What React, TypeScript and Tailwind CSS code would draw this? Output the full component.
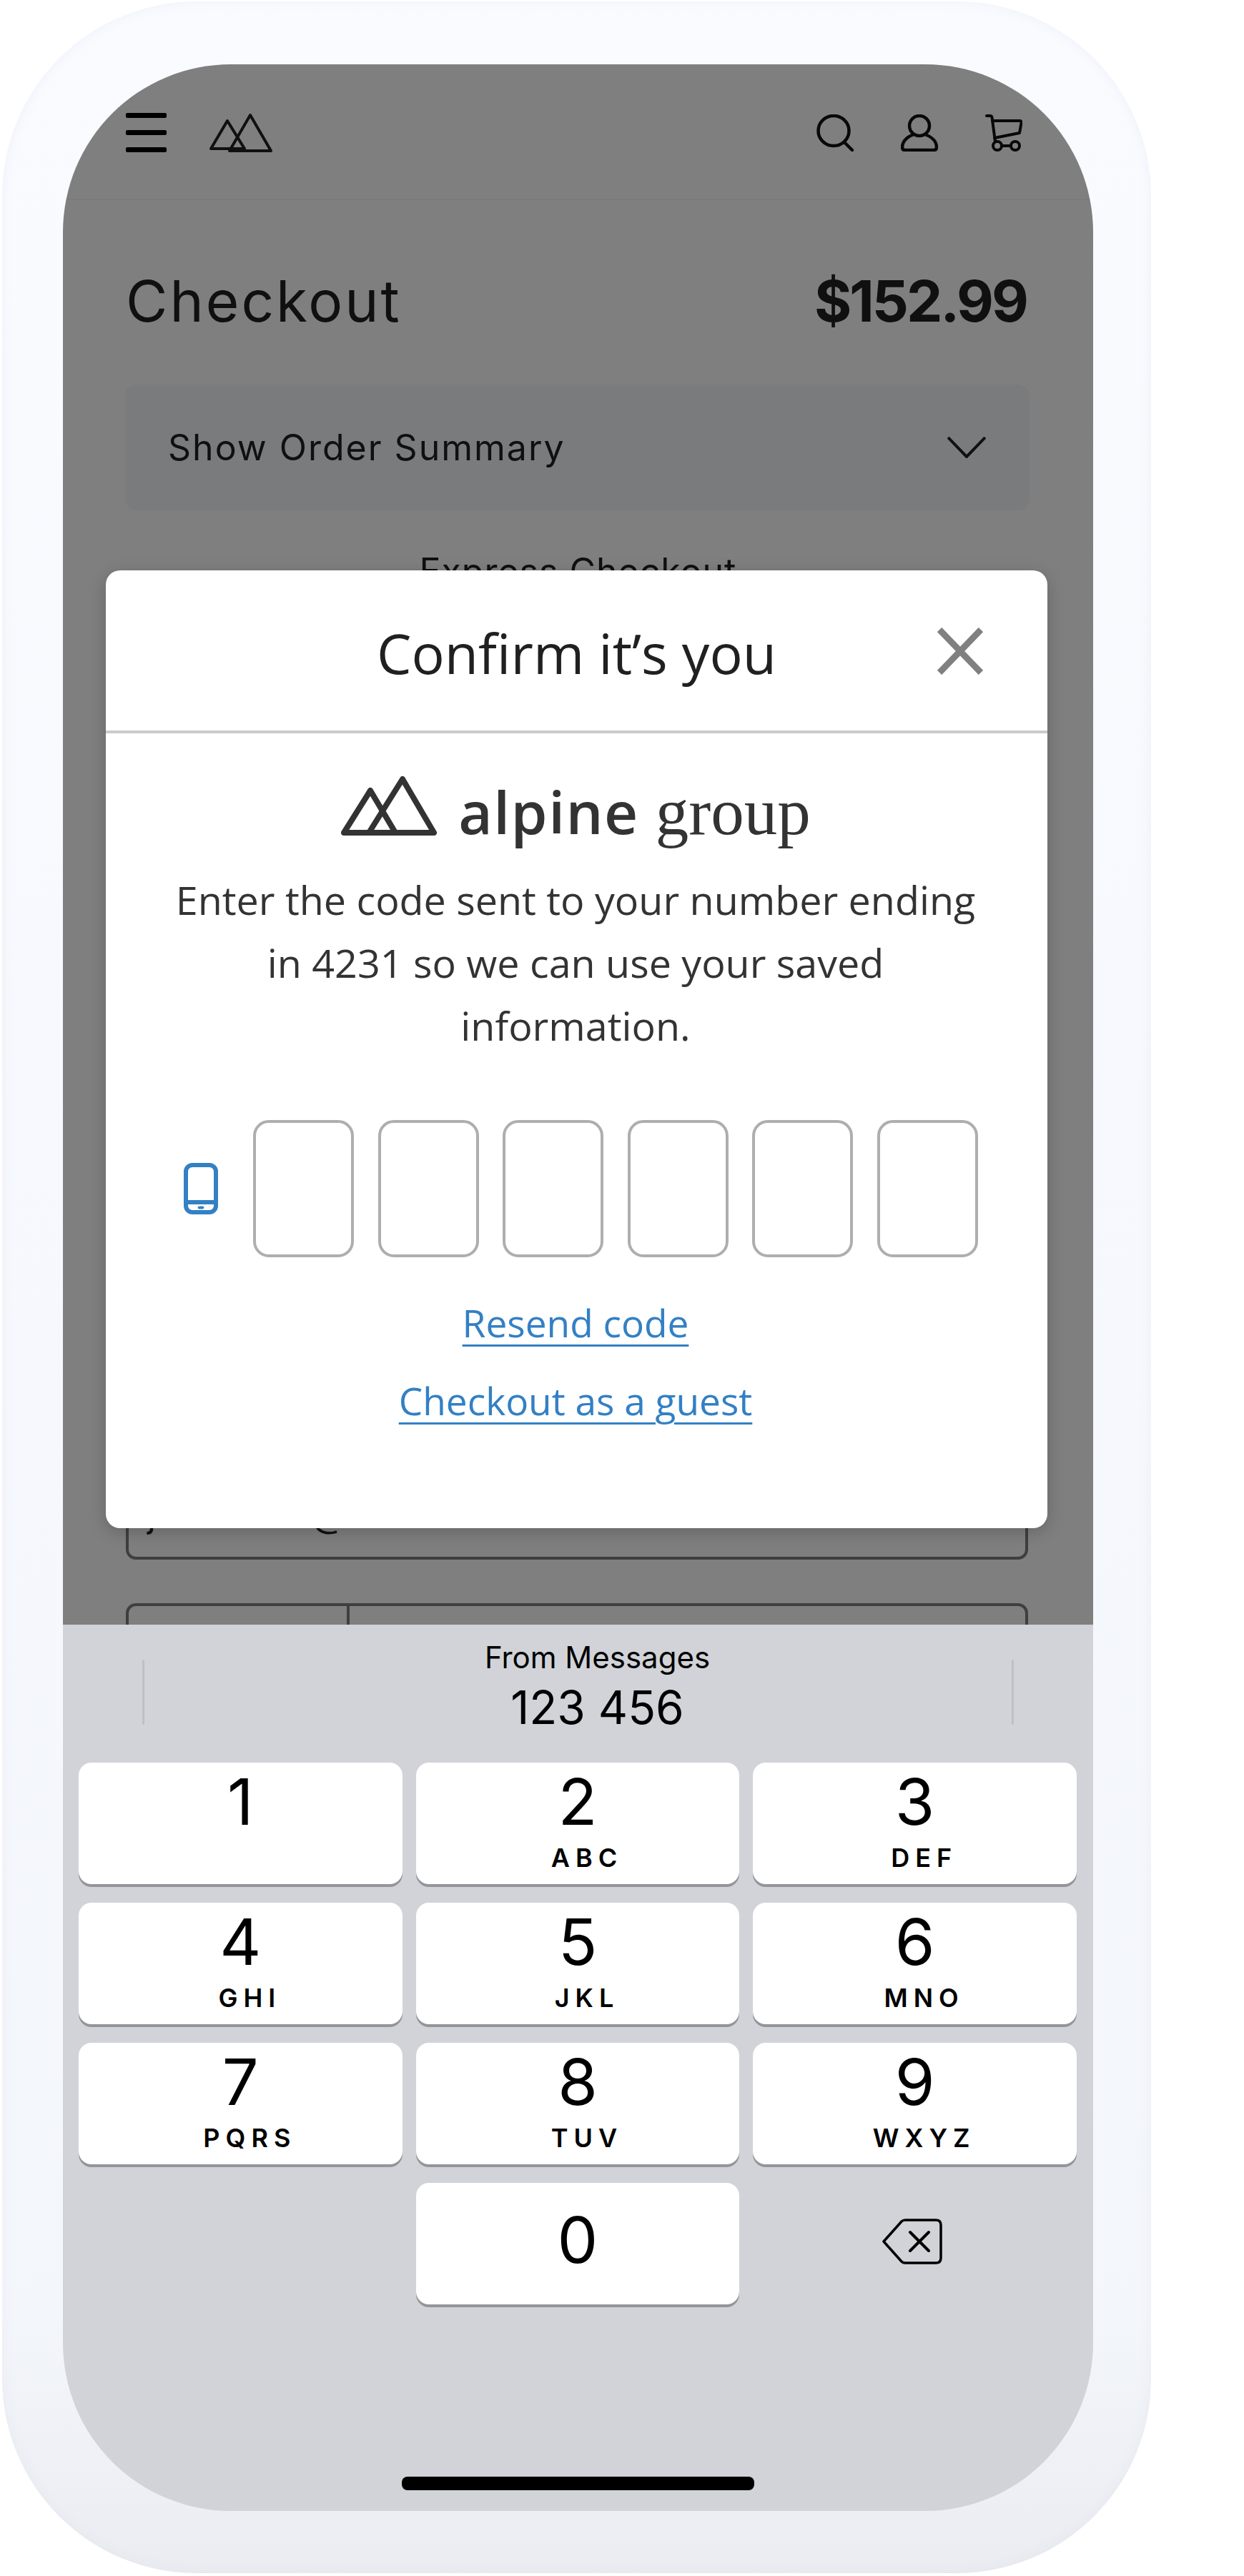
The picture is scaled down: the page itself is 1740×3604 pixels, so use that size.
const keys = [
  { digit: '1', letters: '' },
  { digit: '2', letters: 'ABC' },
  { digit: '3', letters: 'DEF' },
  { digit: '4', letters: 'GHI' },
  { digit: '5', letters: 'JKL' },
  { digit: '6', letters: 'MNO' },
  { digit: '7', letters: 'PQRS' },
  { digit: '8', letters: 'TUV' },
  { digit: '9', letters: 'WXYZ' },
];

function HeaderLogo() {
  return (
    <svg width="90" height="56" viewBox="0 0 90 56" fill="none" stroke="#202020" strokeWidth="4" strokeLinejoin="round">
      <path d="M3 50 L26 11 L50 50 Z" />
      <path d="M29 53 L58 3 L87 53 Z" />
    </svg>
  );
}

function AlpineLogo() {
  return (
    <svg width="136" height="85" viewBox="0 0 136 85" fill="none" stroke="#333333" strokeWidth="8" strokeLinejoin="round">
      <path d="M5 80 L42 21 L77 80 Z" />
      <path d="M40 80 L87 5 L131 80 Z" />
    </svg>
  );
}

function SearchIcon() {
  return (
    <svg width="52" height="52" viewBox="0 0 52 52" fill="none" stroke="#101010" strokeWidth="4.5" strokeLinecap="round">
      <ellipse cx="24" cy="23" rx="21.5" ry="21" />
      <path d="M39 39 L50 50" />
    </svg>
  );
}

function UserIcon() {
  return (
    <svg width="52" height="52" viewBox="0 0 52 52" fill="none" stroke="#101010" strokeWidth="4.5" strokeLinejoin="round">
      <ellipse cx="26" cy="16" rx="14" ry="14" />
      <path d="M18 28 C10 31 2 37 2 46 Q2 50 6 50 H46 Q50 50 50 46 C50 37 42 31 34 28" />
    </svg>
  );
}

function CartIcon() {
  return (
    <svg width="52" height="52" viewBox="0 0 52 52" fill="none" stroke="#101010" strokeWidth="4" strokeLinecap="round" strokeLinejoin="round">
      <path d="M2 2 H7 Q9 2 9.5 4 L14 38" />
      <path d="M10 9 H48 Q51 9 50.5 12 L48 26 L13 33" />
      <circle cx="17" cy="44" r="6" />
      <circle cx="42" cy="44" r="6" />
      <path d="M23 44 H36" />
    </svg>
  );
}

function PhoneIcon() {
  return (
    <svg width="48" height="72" viewBox="0 0 48 72" fill="none" stroke="#3380c4" strokeWidth="6">
      <rect x="3" y="3" width="42" height="66" rx="9" />
      <path d="M3 55 H45" />
      <rect x="20" y="61" width="8" height="3" rx="1.5" fill="#3380c4" strokeWidth="1" />
    </svg>
  );
}

function BackspaceIcon() {
  return (
    <svg width="84" height="64" viewBox="0 0 84 64" fill="none" stroke="#000000" strokeWidth="3.5" strokeLinejoin="round" strokeLinecap="round">
      <path d="M2 32 L27 4 Q29 2 32 2 H75 Q82 2 82 9 V55 Q82 62 75 62 H32 Q29 62 27 60 Z" />
      <path d="M39 19 L65 45 M65 19 L39 45" strokeWidth="4" />
    </svg>
  );
}

export default function App() {
  return (
    <div className="w-[1740px] h-[3604px] bg-white overflow-hidden">
      {/* Phone frame */}
      <div className="ml-[3px] mt-[2px] w-[1607px] h-[3598px] rounded-[272px] bg-gradient-to-b from-[#f9fbff] via-[#f3f6fb] via-90% to-[#eaecf1] pl-[85px] pr-[81px] pt-[88px] pb-[87px] shadow-[inset_0_0_16px_rgba(215,220,230,0.3)]">
        <div className="w-[1441px] h-[3423px] rounded-[235px] overflow-hidden flex flex-col font-['Inter',sans-serif]">
          {/* Checkout page behind the dialog */}
          <div className="relative h-[2183px] shrink-0 bg-white overflow-hidden">
            <header className="h-[190px] px-[88px] pt-[68px] pr-[99px] flex justify-between border-b-2 border-[#f4f4f4]">
              <div className="flex items-start gap-[59px]">
                <div className="flex flex-col gap-[17px]">
                  <div className="w-[57px] h-[7px] rounded-[2px] bg-black" />
                  <div className="w-[57px] h-[7px] rounded-[2px] bg-black" />
                  <div className="w-[57px] h-[7px] rounded-[2px] bg-black" />
                </div>
                <HeaderLogo />
              </div>
              <div className="flex items-start gap-[66px] pt-[2px]">
                <SearchIcon />
                <UserIcon />
                <CartIcon />
              </div>
            </header>

            <div className="mt-[101px] pl-[88px] pr-[93px] flex justify-between text-[80px] leading-[80px] text-[#202020]">
              <h1 className="font-normal tracking-[3px]">Checkout</h1>
              <span className="font-bold tracking-[-3px]">$152.99</span>
            </div>

            <div className="mt-[77px] ml-[87px] mr-[89px] h-[176px] rounded-2xl bg-[#f5f6fa] pl-[60px] pr-[61px] flex items-center justify-between text-[50px] tracking-[2px] text-[#202020]">
              <span>Show Order Summary</span>
              <svg width="54" height="30" viewBox="0 0 54 30" fill="none" stroke="#202020" strokeWidth="4">
                <path d="M1 1 L27 28 L53 1" />
              </svg>
            </div>

            <p className="mt-[60px] text-center text-[50px] leading-[50px] tracking-[1px] text-[#202020]">Express Checkout</p>

            <div className="mt-[1226px] ml-[88px] mr-[91px] h-[132px] rounded-[14px] border-4 border-[#7e7e7e] pl-[26px] pt-[28px] text-[50px] text-[#202020]">
              johnsmith@email.com
            </div>

            <div className="mt-[61px] ml-[88px] mr-[91px] h-[130px] rounded-[14px] border-4 border-[#7e7e7e] flex">
              <div className="w-[309px] border-r-4 border-[#7e7e7e]" />
            </div>

            <div className="absolute inset-0 bg-black/50" />

            {/* Confirm dialog */}
            <div className="absolute left-[60px] top-[708px] w-[1317px] h-[1340px] rounded-[20px] bg-white shadow-[0_6px_24px_rgba(0,0,0,0.2)] font-['Open_Sans',sans-serif]">
              <div className="relative h-[228px] border-b-4 border-[#cbcbcb] flex justify-center pt-[66px]">
                <h2 className="text-[77px] leading-[100px] font-normal text-[#202020]">Confirm it’s you</h2>
                <svg className="absolute right-[90px] top-[80px]" width="64" height="66" viewBox="0 0 64 66" fill="none" stroke="#808080" strokeWidth="9">
                  <path d="M3 3 L61 63 M61 3 L3 63" />
                </svg>
              </div>

              <div className="pt-[59px] pr-[3px] flex flex-col items-center">
                <div className="h-[100px] flex items-start gap-[29px]">
                  <AlpineLogo />
                  <div className="flex items-baseline gap-[23px] text-[#333333] -mt-[5px]">
                    <span className="text-[82px] leading-[110px] font-semibold tracking-[1.5px]">alpine</span>
                    <span className="text-[93px] leading-[110px] font-['Liberation_Serif',serif]">group</span>
                  </div>
                </div>

                <p className="mt-[30px] max-w-[1130px] text-center text-[55.6px] leading-[88px] text-[#333333]">
                  Enter the code sent to your number ending in 4231 so we can use your saved information.
                </p>

                <div className="mt-[88px] self-start pl-[109px] flex items-center gap-[49px]">
                  <PhoneIcon />
                  <div className="flex gap-[33.6px]">
                    {[0, 1, 2, 3, 4, 5].map((i) => (
                      <div key={i} className="w-[141px] h-[192px] rounded-[22px] border-4 border-[#aeaeae]" />
                    ))}
                  </div>
                </div>

                <a className="mt-[52px] text-[53.2px] leading-[80px] text-[#3380c4] underline decoration-[3px] underline-offset-[10px]">Resend code</a>
                <a className="mt-[29px] text-[53.2px] leading-[80px] text-[#3380c4] underline decoration-[3px] underline-offset-[10px]">Checkout as a guest</a>
              </div>
            </div>
          </div>

          {/* Numeric keyboard */}
          <div className="flex-1 bg-[#d1d3d8] flex flex-col">
            <div className="h-[193px] px-[111px] pt-[49px] flex justify-between">
              <div className="w-[3px] h-[91px] rounded-full bg-[#bec0c5]" />
              <div className="flex-1 pl-[54px] -mt-[33px] flex flex-col items-center text-black">
                <span className="text-[42px] leading-[60px]">From Messages</span>
                <span className="text-[64px] leading-[80px]">123 456</span>
              </div>
              <div className="w-[3px] h-[91px] rounded-full bg-[#bec0c5]" />
            </div>

            <div className="grid grid-cols-3 auto-rows-[170px] gap-x-[19px] gap-y-[26px] pl-[22px] pr-[23px]">
              {keys.map((k) => (
                <div key={k.digit} className="rounded-[18px] bg-white shadow-[0_4px_0_#94959a] flex flex-col items-center pt-[10px] text-black">
                  <span className="text-[90px] leading-[90px]">{k.digit}</span>
                  {k.letters && (
                    <span className="mt-[15px] pl-[26px] text-[36px] leading-[36px] font-semibold tracking-[8px]">{k.letters}</span>
                  )}
                </div>
              ))}
              <div />
              <div className="rounded-[18px] bg-white shadow-[0_4px_0_#94959a] flex justify-center pt-[35px] text-black">
                <span className="text-[90px] leading-[90px]">0</span>
              </div>
              <div className="flex items-center justify-center pb-[6px] pr-[8px]">
                <BackspaceIcon />
              </div>
            </div>

            <div className="mt-[241px] self-center w-[493px] h-[19px] rounded-[8px] bg-black" />
          </div>
        </div>
      </div>
    </div>
  );
}
